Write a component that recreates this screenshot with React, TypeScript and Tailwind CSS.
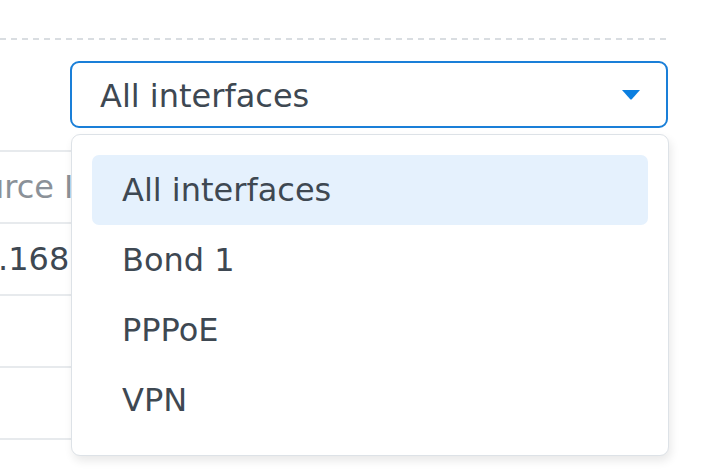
const options = ["All interfaces", "Bond 1", "PPPoE", "VPN"];

const font = { fontFamily: '"DejaVu Sans", Verdana, sans-serif' };

function Caret() {
  return (
    <svg width="18" height="10" viewBox="0 0 18 10" className="shrink-0">
      <path d="M0 0 H18 L10 9 Q9 10 8 9 Z" fill="#0b7fe0" />
    </svg>
  );
}

export default function App() {
  return (
    <div
      className="relative h-[474px] w-[714px] overflow-hidden bg-white text-[#3e4852]"
      style={font}
    >
      {/* dashed separator */}
      <div className="h-[38px]" />
      <div className="h-[2px] w-[668px] bg-[linear-gradient(to_right,#d9dde1_6px,transparent_6px)] bg-[length:11px_2px]" />

      {/* select */}
      <div className="ml-[70px] mt-[21px] flex h-[67px] w-[598px] items-center justify-between rounded-[9px] border-2 border-[#1a7fd8] pl-[28px] pr-[26px]">
        <span className="pt-[3px] text-[32px] leading-none">All interfaces</span>
        <Caret />
      </div>

      {/* table behind the menu */}
      <div className="mt-[22px] w-[300px] border-t-2 border-[#e7eaed]">
        <div className="flex h-[72px] items-center border-b-2 border-[#e7eaed]">
          <span className="ml-[-56px] whitespace-nowrap text-[32px] text-[#8b9198]">Source IP</span>
        </div>
        <div className="flex h-[72px] items-center border-b-2 border-[#e7eaed]">
          <span className="ml-[-63px] whitespace-nowrap text-[32px]">192.168.1.10</span>
        </div>
        <div className="h-[72px] border-b-2 border-[#e7eaed]" />
        <div className="h-[72px] border-b-2 border-[#e7eaed]" />
      </div>

      {/* open menu */}
      <div className="absolute left-[71px] top-[134px] w-[598px] rounded-[9px] border border-[#dde2e7] bg-white px-[20px] py-[20px] shadow-[2px_5px_10px_rgba(0,0,0,0.09)]">
        {options.map((opt, i) => (
          <div
            key={opt}
            className={`flex h-[70px] items-center rounded-[7px] pl-[30px] text-[32px] ${
              i === 0 ? "bg-[#e5f1fd]" : ""
            }`}
          >
            {opt}
          </div>
        ))}
      </div>
    </div>
  );
}
